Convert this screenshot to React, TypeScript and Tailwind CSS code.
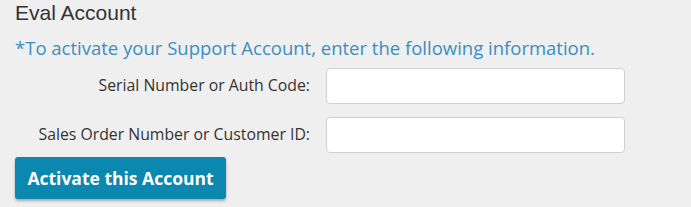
export default function App() {
  return (
    <div className="min-h-[207px] w-[691px] bg-[#efefef] pl-[15px] [font-family:'Open_Sans',sans-serif] text-[#333]">
      <h3 className="[font-family:'Liberation_Sans',Arial,sans-serif] text-[21px] leading-[26px] text-[#333]">Eval Account</h3>
      <p className="mt-[10px] text-[18.5px] leading-[24px] text-[#3b8ec2]">
        *To activate your Support Account, enter the following information.
      </p>
      <div className="mt-[8px] flex flex-col gap-[13px]">
        <div className="flex items-center">
          <label className="w-[295px] text-right text-[15.8px]">Serial Number or Auth Code:</label>
          <input className="ml-[16px] h-[36px] w-[299px] rounded-[4px] border border-[#d0d0d0] bg-white" />
        </div>
        <div className="flex items-center">
          <label className="w-[295px] text-right text-[15.8px]">Sales Order Number or Customer ID:</label>
          <input className="ml-[16px] h-[36px] w-[299px] rounded-[4px] border border-[#d0d0d0] bg-white" />
        </div>
      </div>
      <button className="mt-[4px] h-[42px] w-[211px] rounded-[3px] bg-[#0b87b0] text-[17.5px] font-bold text-white shadow-[0_2px_3px_rgba(0,0,0,0.3)]">
        Activate this Account
      </button>
    </div>
  );
}
